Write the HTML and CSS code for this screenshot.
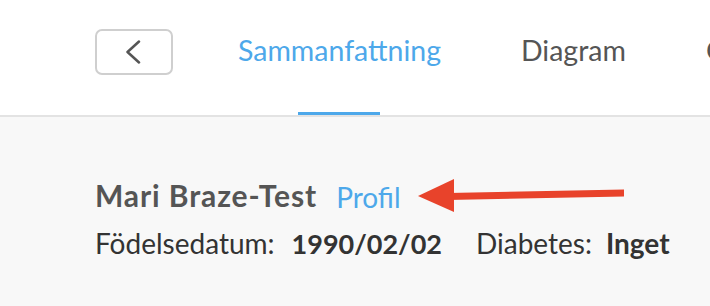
FILE: index.html
```html
<!DOCTYPE html>
<html lang="sv">
<head>
<meta charset="utf-8">
<link rel="stylesheet" href="styles.css">
</head>
<body>
<header class="topbar">
  <button class="back" aria-label="Tillbaka">
    <svg width="16" height="24" viewBox="0 0 16 24"><path d="M14 1.5 L2.5 12 L14 22.5" fill="none" stroke="#555" stroke-width="2.5" stroke-linecap="round" stroke-linejoin="round"/></svg>
  </button>
  <nav class="tabs">
    <a class="tab active">Sammanfattning</a>
    <a class="tab">Diagram</a>
    <a class="tab">Glukos</a>
  </nav>
</header>
<main class="content">
  <div class="name-row">
    <h1 class="name">Mari Braze-Test</h1>
    <a class="profile">Profil</a>
    <svg class="arrow" width="210" height="40" viewBox="0 0 210 40">
      <path d="M30 17 L206 13.5 L206 20.5 L30 24 Z" fill="#e8432b"/>
      <path d="M0 20 L36 3 L36 36 Z" fill="#e8432b"/>
    </svg>
  </div>
  <div class="info">
    <span class="label first">Födelsedatum:</span><span class="value first">1990/02/02</span>
    <span class="label">Diabetes:</span><span class="value last">Inget</span>
  </div>
</main>
</body>
</html>
```
FILE: styles.css
```css
html, body {
  margin: 0;
  padding: 0;
}
body {
  font-family: Lato, "Open Sans", sans-serif;
  background: #f8f8f8;
  width: 710px;
  height: 306px;
  overflow: hidden;
}
.topbar {
  background: #fff;
  height: 115px;
  border-bottom: 2px solid #e3e3e3;
  display: flex;
  align-items: flex-start;
  padding-left: 95px;
  overflow: hidden;
}
.back {
  flex-shrink: 0;
  margin-top: 29px;
  width: 78px;
  height: 46px;
  border: 2px solid #cfcfcf;
  border-radius: 7px;
  background: #fff;
  display: flex;
  align-items: center;
  justify-content: center;
  padding: 0 3px 0 0;
  box-sizing: border-box;
}
.tabs {
  display: flex;
  margin-left: 65px;
  gap: 80px;
  white-space: nowrap;
}
.tab {
  position: relative;
  flex-shrink: 0;
  display: block;
  box-sizing: border-box;
  height: 115px;
  padding-top: 33px;
  font-size: 28.5px;
  line-height: 34px;
  color: #555;
}
.tab.active {
  color: #4da8ea;
}
.tab.active::after {
  content: "";
  position: absolute;
  left: 50%;
  transform: translateX(-50%);
  bottom: -3px;
  width: 82px;
  height: 6px;
  background: #4da8ea;
}
.content {
  padding: 60px 0 0 95px;
}
.name-row {
  display: flex;
  align-items: flex-start;
}
.name {
  margin: 0;
  font-size: 30px;
  line-height: 36px;
  letter-spacing: 0.9px;
  font-weight: 700;
  color: #555;
}
.profile {
  margin-left: 19px;
  margin-top: 3px;
  font-size: 28px;
  line-height: 34px;
  color: #4da8ea;
}
.arrow {
  margin-left: 17px;
  margin-top: -1px;
  flex-shrink: 0;
}
.info {
  margin-top: 10px;
  font-size: 28px;
  line-height: 34px;
  color: #333;
  display: flex;
  align-items: baseline;
  white-space: nowrap;
}
.label { margin-right: 14px; }
.label.first { margin-right: 17px; }
.value { font-weight: 700; font-size: 27px; }
.value.first { margin-right: 34px; }
.value.last { font-size: 28px; }
```
